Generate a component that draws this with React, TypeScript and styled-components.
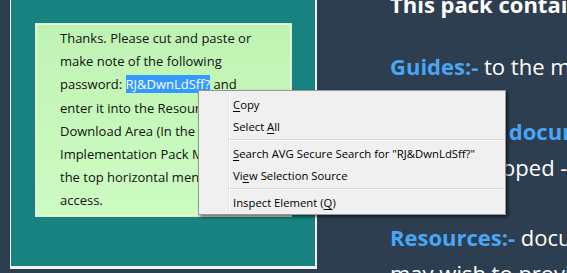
import React from 'react';
import styled, { createGlobalStyle } from 'styled-components';

const GlobalStyle = createGlobalStyle`
  html, body {
    margin: 0;
    padding: 0;
    background: #2c3e50;
    overflow: hidden;
  }
  body {
    font-family: "Open Sans", "Noto Sans", sans-serif;
  }
`;

const SPage = styled.div`
  position: relative;
  display: flex;
  align-items: flex-start;
  height: 273px;
  padding-left: 10px;
  overflow: hidden;
`;

const SPanel = styled.div`
  flex: none;
  width: 257px;
  padding: 23px 23px 49px 24px;
  background: #178280;
  border-left: 1px solid #f2f2f2;
  border-right: 2px solid #f2f2f2;
  border-bottom: 3px solid #f2f2f2;
`;

const SNote = styled.div`
  box-sizing: border-box;
  width: 257px;
  height: 194px;
  padding: 3px 0 0 24px;
  background: linear-gradient(#bff3b3, #cdfcc2);
  border: 1px solid #d6ecce;
  box-shadow: inset 0 0 0 1px #e4f8dc;
  font-size: 13px;
  line-height: 23.2px;
  color: #111111;
  white-space: nowrap;
`;

const SSelected = styled.span`
  background: #3399ff;
  color: #ffffff;
`;

const SContent = styled.div`
  flex: none;
  margin: -14.5px 0 0 73px;
  font-size: 22px;
  line-height: 36px;
  color: #ffffff;
  white-space: nowrap;
`;

const SHeading = styled.div`
  font-weight: 700;
  margin-bottom: 26px;
`;

const SParagraph = styled.div<{ $space: number }>`
  margin-bottom: ${({ $space }) => $space}px;
`;

const SLabel = styled.span`
  font-weight: 700;
  color: #4aa6f4;
`;

const SMenu = styled.div`
  position: absolute;
  left: 198px;
  top: 90px;
  box-sizing: border-box;
  width: 308px;
  height: 125px;
  display: flex;
  background: #f0f0f0;
  border: 1px solid #979797;
  box-shadow: 2px 2px 3px rgba(0, 0, 0, 0.55);
  font-family: "Open Sans", "Noto Sans", sans-serif;
  font-size: 11.3px;
  color: #000000;
`;

const SGutter = styled.div`
  flex: none;
  width: 29px;
  margin: 2px 0;
  border-right: 1px solid #e2e3e3;
  box-shadow: 1px 0 0 #ffffff;
`;

const SList = styled.div`
  flex: 1;
  padding: 3px 2px 0 0;
`;

const SItem = styled.div`
  height: 22px;
  line-height: 22px;
  padding-left: 4px;
  white-space: nowrap;
`;

const SSeparator = styled.div`
  height: 1px;
  margin: 1px 0 2px;
  background: #d7d7d7;
  border-bottom: 1px solid #ffffff;
`;

const SKey = styled.u`
  text-decoration-thickness: 1px;
  text-underline-offset: 2px;
`;

export default function App() {
  return (
    <>
      <GlobalStyle />
      <SPage>
        <SPanel>
          <SNote>
            Thanks. Please cut and paste or
            <br />
            make note of the following
            <br />
            password: <SSelected>RJ&amp;DwnLdSff?</SSelected> and
            <br />
            enter it into the Resources
            <br />
            Download Area (In the
            <br />
            Implementation Pack Menu
            <br />
            the top horizontal menu) to
            <br />
            access.
          </SNote>
        </SPanel>

        <SContent>
          <SHeading>This pack contains:</SHeading>
          <SParagraph $space={29}>
            <SLabel>Guides:-</SLabel> to the main steps
          </SParagraph>
          <SParagraph $space={34}>
            <SLabel>Procedure documents:-</SLabel> these
            <br />
            been developed - and
          </SParagraph>
          <SParagraph $space={0}>
            <SLabel>Resources:-</SLabel> documents you
            <br />
            may wish to provide
          </SParagraph>
        </SContent>

        <SMenu>
          <SGutter />
          <SList>
            <SItem>
              <SKey>C</SKey>opy
            </SItem>
            <SItem>
              Select <SKey>A</SKey>ll
            </SItem>
            <SSeparator />
            <SItem>
              <SKey>S</SKey>earch AVG Secure Search for "RJ&amp;DwnLdSff?"
            </SItem>
            <SItem>
              Vi<SKey>e</SKey>w Selection Source
            </SItem>
            <SSeparator />
            <SItem>
              Inspect Element (<SKey>Q</SKey>)
            </SItem>
          </SList>
        </SMenu>
      </SPage>
    </>
  );
}
